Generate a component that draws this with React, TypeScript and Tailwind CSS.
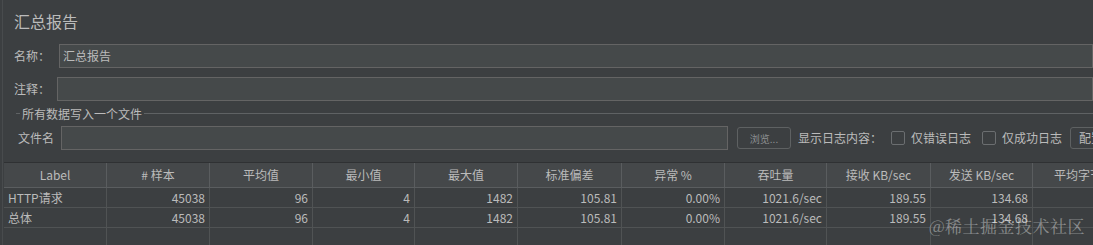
const font = "font-['Noto_Sans_CJK_SC','Noto_Sans',sans-serif]";

const columns = [
  { title: "Label", width: 103 },
  { title: "# 样本", width: 103 },
  { title: "平均值", width: 103 },
  { title: "最小值", width: 102 },
  { title: "最大值", width: 103 },
  { title: "标准偏差", width: 104 },
  { title: "异常 %", width: 103 },
  { title: "吞吐量", width: 102 },
  { title: "接收 KB/sec", width: 104 },
  { title: "发送 KB/sec", width: 102 },
  { title: "平均字节数", width: 103 },
];

const rows = [
  ["HTTP请求", "45038", "96", "4", "1482", "105.81", "0.00%", "1021.6/sec", "189.55", "134.68", "2342.0"],
  ["总体", "45038", "96", "4", "1482", "105.81", "0.00%", "1021.6/sec", "189.55", "134.68", "2342.0"],
];

function Checkbox({ label }: { label: string }) {
  return (
    <div className="flex items-center gap-[6px] shrink-0 whitespace-nowrap">
      <div className="w-[14px] h-[14px] rounded-[2px] border border-[#6b6e70] bg-[#3c3f41] shrink-0" />
      <span>{label}</span>
    </div>
  );
}

export default function App() {
  return (
    <div className={`relative w-[1093px] h-[245px] overflow-hidden bg-[#3c3f41] text-[#bbbbbb] text-[12px] ${font}`}>
      <div className="flex flex-col h-full border-l border-[#484b4d] ml-[2px]">
        {/* title */}
        <div className="h-[44px] flex items-center pl-[11px] text-[16px] pb-[2px]">汇总报告</div>

        {/* name */}
        <div className="flex items-center h-[24px]">
          <span className="w-[56px] pl-[11px] shrink-0">名称：</span>
          <div className="flex-1 h-full border border-[#646464] bg-[#45494a] flex items-center pl-[3px] text-[12px]">汇总报告</div>
        </div>

        {/* comment */}
        <div className="flex items-center h-[24px] mt-[9px]">
          <span className="w-[54px] pl-[11px] shrink-0">注释：</span>
          <div className="flex-1 h-full border border-[#646464] bg-[#45494a]" />
        </div>

        {/* group title */}
        <div className="flex items-center h-[25px] pl-[13px]">
          <div className="w-[4px] h-px bg-[#5f6264]" />
          <span className="px-[2px]">所有数据写入一个文件</span>
          <div className="flex-1 h-px bg-[#5f6264]" />
        </div>

        {/* file row */}
        <div className="flex items-center h-[24px] whitespace-nowrap">
          <span className="w-[58px] pl-[15px] shrink-0">文件名</span>
          <div className="w-[667px] h-full border border-[#646464] bg-[#45494a] shrink-0" />
          <button className="ml-[9px] w-[54px] h-[22px] rounded-[3px] border border-[#5e6162] bg-[#3c3f41] text-[10px] text-[#8c8f91] shrink-0">浏览...</button>
          <span className="ml-[7px] shrink-0">显示日志内容：</span>
          <div className="ml-[9px] shrink-0"><Checkbox label="仅错误日志" /></div>
          <div className="ml-[11px] shrink-0"><Checkbox label="仅成功日志" /></div>
          <button className="ml-[8px] w-[60px] h-[22px] rounded-[3px] border border-[#5e6162] bg-[#3c3f41] text-left pl-[8px] shrink-0">配置</button>
        </div>

        {/* table */}
        <div className="mt-[12px] ml-[1px] flex-1 flex flex-col border-t border-[#2f3133]">
          <div className="flex h-[25px] bg-[#45484a] border-b border-[#5a5d5f]">
            {columns.map((c) => (
              <div
                key={c.title}
                className="shrink-0 flex items-center justify-center border-r border-[#5a5d5f] whitespace-nowrap overflow-hidden"
                style={{ width: c.width }}
              >
                {c.title}
              </div>
            ))}
          </div>
          {rows.map((r, i) => (
            <div key={i} className="flex h-[20px] border-b border-[#505354]">
              {r.map((v, j) => (
                <div
                  key={j}
                  className={`shrink-0 flex items-center border-r border-[#505354] whitespace-nowrap overflow-hidden ${j === 0 ? "justify-start pl-[4px]" : "justify-end pr-[4px]"}`}
                  style={{ width: columns[j].width }}
                >
                  {v}
                </div>
              ))}
            </div>
          ))}
          <div className="flex flex-1">
            {columns.map((c) => (
              <div key={c.title} className="shrink-0 border-r border-[#505354]" style={{ width: c.width }} />
            ))}
          </div>
        </div>
      </div>

      {/* watermark */}
      <div className="absolute right-[8px] bottom-[7px] text-[17px] text-white/40 font-['Noto_Serif_CJK_SC','Noto_Sans_CJK_SC',serif] tracking-[0.5px]">
        @稀土掘金技术社区
      </div>
    </div>
  );
}
